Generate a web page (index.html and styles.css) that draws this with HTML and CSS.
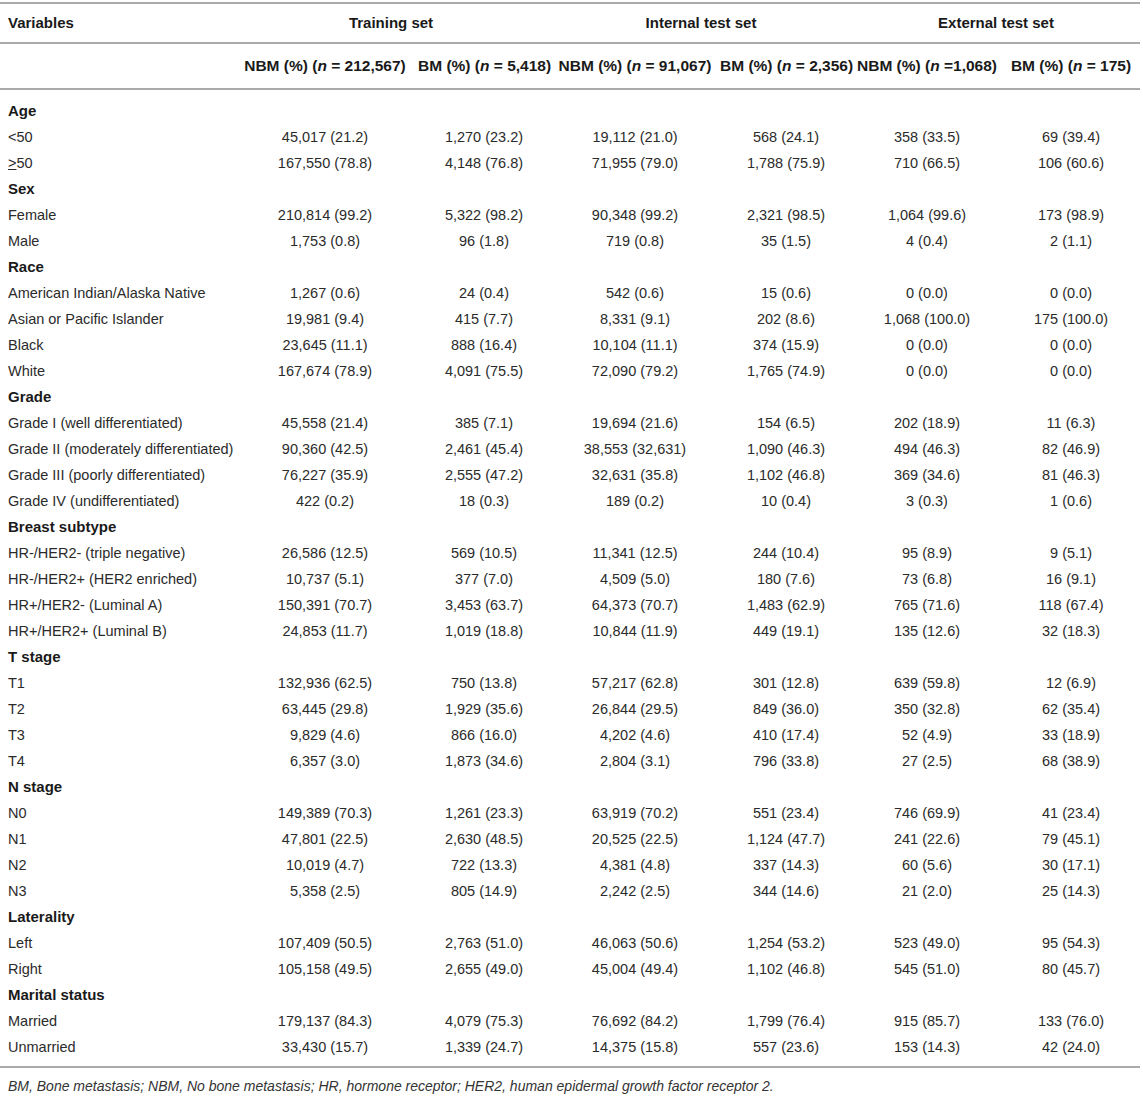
FILE: index.html
```html
<!DOCTYPE html>
<html lang="en">
<head>
  <meta charset="UTF-8">
  <meta name="viewport" content="width=device-width, initial-scale=1">
  <title>Patient characteristics</title>
  <link rel="stylesheet" href="styles.css">
</head>
<body>

  <div class="wrap">
    <table class="stats">
      <colgroup>
        <col class="c-var">
        <col class="c-train-nbm">
        <col class="c-train-bm">
        <col class="c-int-nbm">
        <col class="c-int-bm">
        <col class="c-ext-nbm">
        <col class="c-ext-bm">
      </colgroup>
      <thead>
        <tr class="head-top">
          <th class="var">Variables</th>
          <th colspan="2">Training set</th>
          <th colspan="2">Internal test set</th>
          <th colspan="2">External test set</th>
        </tr>
        <tr class="head-sub">
          <th></th>
          <th>NBM (%) (<i>n</i> = 212,567)</th>
          <th>BM (%) (<i>n</i> = 5,418)</th>
          <th>NBM (%) (<i>n</i> = 91,067)</th>
          <th>BM (%) (<i>n</i> = 2,356)</th>
          <th>NBM (%) (<i>n</i> =1,068)</th>
          <th>BM (%) (<i>n</i> = 175)</th>
        </tr>
      </thead>
      <tbody>
        <!-- Age -->
        <tr class="group"><td>Age</td><td></td><td></td><td></td><td></td><td></td><td></td></tr>
        <tr><td>&lt;50</td><td>45,017 (21.2)</td><td>1,270 (23.2)</td><td>19,112 (21.0)</td><td>568 (24.1)</td><td>358 (33.5)</td><td>69 (39.4)</td></tr>
        <tr><td><u>&gt;</u>50</td><td>167,550 (78.8)</td><td>4,148 (76.8)</td><td>71,955 (79.0)</td><td>1,788 (75.9)</td><td>710 (66.5)</td><td>106 (60.6)</td></tr>

        <!-- Sex -->
        <tr class="group"><td>Sex</td><td></td><td></td><td></td><td></td><td></td><td></td></tr>
        <tr><td>Female</td><td>210,814 (99.2)</td><td>5,322 (98.2)</td><td>90,348 (99.2)</td><td>2,321 (98.5)</td><td>1,064 (99.6)</td><td>173 (98.9)</td></tr>
        <tr><td>Male</td><td>1,753 (0.8)</td><td>96 (1.8)</td><td>719 (0.8)</td><td>35 (1.5)</td><td>4 (0.4)</td><td>2 (1.1)</td></tr>

        <!-- Race -->
        <tr class="group"><td>Race</td><td></td><td></td><td></td><td></td><td></td><td></td></tr>
        <tr><td>American Indian/Alaska Native</td><td>1,267 (0.6)</td><td>24 (0.4)</td><td>542 (0.6)</td><td>15 (0.6)</td><td>0 (0.0)</td><td>0 (0.0)</td></tr>
        <tr><td>Asian or Pacific Islander</td><td>19,981 (9.4)</td><td>415 (7.7)</td><td>8,331 (9.1)</td><td>202 (8.6)</td><td>1,068 (100.0)</td><td>175 (100.0)</td></tr>
        <tr><td>Black</td><td>23,645 (11.1)</td><td>888 (16.4)</td><td>10,104 (11.1)</td><td>374 (15.9)</td><td>0 (0.0)</td><td>0 (0.0)</td></tr>
        <tr><td>White</td><td>167,674 (78.9)</td><td>4,091 (75.5)</td><td>72,090 (79.2)</td><td>1,765 (74.9)</td><td>0 (0.0)</td><td>0 (0.0)</td></tr>

        <!-- Grade -->
        <tr class="group"><td>Grade</td><td></td><td></td><td></td><td></td><td></td><td></td></tr>
        <tr><td>Grade I (well differentiated)</td><td>45,558 (21.4)</td><td>385 (7.1)</td><td>19,694 (21.6)</td><td>154 (6.5)</td><td>202 (18.9)</td><td>11 (6.3)</td></tr>
        <tr><td>Grade II (moderately differentiated)</td><td>90,360 (42.5)</td><td>2,461 (45.4)</td><td>38,553 (32,631)</td><td>1,090 (46.3)</td><td>494 (46.3)</td><td>82 (46.9)</td></tr>
        <tr><td>Grade III (poorly differentiated)</td><td>76,227 (35.9)</td><td>2,555 (47.2)</td><td>32,631 (35.8)</td><td>1,102 (46.8)</td><td>369 (34.6)</td><td>81 (46.3)</td></tr>
        <tr><td>Grade IV (undifferentiated)</td><td>422 (0.2)</td><td>18 (0.3)</td><td>189 (0.2)</td><td>10 (0.4)</td><td>3 (0.3)</td><td>1 (0.6)</td></tr>

        <!-- Breast subtype -->
        <tr class="group"><td>Breast subtype</td><td></td><td></td><td></td><td></td><td></td><td></td></tr>
        <tr><td>HR-/HER2- (triple negative)</td><td>26,586 (12.5)</td><td>569 (10.5)</td><td>11,341 (12.5)</td><td>244 (10.4)</td><td>95 (8.9)</td><td>9 (5.1)</td></tr>
        <tr><td>HR-/HER2+ (HER2 enriched)</td><td>10,737 (5.1)</td><td>377 (7.0)</td><td>4,509 (5.0)</td><td>180 (7.6)</td><td>73 (6.8)</td><td>16 (9.1)</td></tr>
        <tr><td>HR+/HER2- (Luminal A)</td><td>150,391 (70.7)</td><td>3,453 (63.7)</td><td>64,373 (70.7)</td><td>1,483 (62.9)</td><td>765 (71.6)</td><td>118 (67.4)</td></tr>
        <tr><td>HR+/HER2+ (Luminal B)</td><td>24,853 (11.7)</td><td>1,019 (18.8)</td><td>10,844 (11.9)</td><td>449 (19.1)</td><td>135 (12.6)</td><td>32 (18.3)</td></tr>

        <!-- T stage -->
        <tr class="group"><td>T stage</td><td></td><td></td><td></td><td></td><td></td><td></td></tr>
        <tr><td>T1</td><td>132,936 (62.5)</td><td>750 (13.8)</td><td>57,217 (62.8)</td><td>301 (12.8)</td><td>639 (59.8)</td><td>12 (6.9)</td></tr>
        <tr><td>T2</td><td>63,445 (29.8)</td><td>1,929 (35.6)</td><td>26,844 (29.5)</td><td>849 (36.0)</td><td>350 (32.8)</td><td>62 (35.4)</td></tr>
        <tr><td>T3</td><td>9,829 (4.6)</td><td>866 (16.0)</td><td>4,202 (4.6)</td><td>410 (17.4)</td><td>52 (4.9)</td><td>33 (18.9)</td></tr>
        <tr><td>T4</td><td>6,357 (3.0)</td><td>1,873 (34.6)</td><td>2,804 (3.1)</td><td>796 (33.8)</td><td>27 (2.5)</td><td>68 (38.9)</td></tr>

        <!-- N stage -->
        <tr class="group"><td>N stage</td><td></td><td></td><td></td><td></td><td></td><td></td></tr>
        <tr><td>N0</td><td>149,389 (70.3)</td><td>1,261 (23.3)</td><td>63,919 (70.2)</td><td>551 (23.4)</td><td>746 (69.9)</td><td>41 (23.4)</td></tr>
        <tr><td>N1</td><td>47,801 (22.5)</td><td>2,630 (48.5)</td><td>20,525 (22.5)</td><td>1,124 (47.7)</td><td>241 (22.6)</td><td>79 (45.1)</td></tr>
        <tr><td>N2</td><td>10,019 (4.7)</td><td>722 (13.3)</td><td>4,381 (4.8)</td><td>337 (14.3)</td><td>60 (5.6)</td><td>30 (17.1)</td></tr>
        <tr><td>N3</td><td>5,358 (2.5)</td><td>805 (14.9)</td><td>2,242 (2.5)</td><td>344 (14.6)</td><td>21 (2.0)</td><td>25 (14.3)</td></tr>

        <!-- Laterality -->
        <tr class="group"><td>Laterality</td><td></td><td></td><td></td><td></td><td></td><td></td></tr>
        <tr><td>Left</td><td>107,409 (50.5)</td><td>2,763 (51.0)</td><td>46,063 (50.6)</td><td>1,254 (53.2)</td><td>523 (49.0)</td><td>95 (54.3)</td></tr>
        <tr><td>Right</td><td>105,158 (49.5)</td><td>2,655 (49.0)</td><td>45,004 (49.4)</td><td>1,102 (46.8)</td><td>545 (51.0)</td><td>80 (45.7)</td></tr>

        <!-- Marital status -->
        <tr class="group"><td>Marital status</td><td></td><td></td><td></td><td></td><td></td><td></td></tr>
        <tr><td>Married</td><td>179,137 (84.3)</td><td>4,079 (75.3)</td><td>76,692 (84.2)</td><td>1,799 (76.4)</td><td>915 (85.7)</td><td>133 (76.0)</td></tr>
        <tr><td>Unmarried</td><td>33,430 (15.7)</td><td>1,339 (24.7)</td><td>14,375 (15.8)</td><td>557 (23.6)</td><td>153 (14.3)</td><td>42 (24.0)</td></tr>
      </tbody>
    </table>

    <p class="note">BM, Bone metastasis; NBM, No bone metastasis; HR, hormone receptor; HER2, human epidermal growth factor receptor 2.</p>
  </div>

</body>
</html>
```

FILE: styles.css
```css
body { margin: 0; background: #fff; color: #2b2b2b; font-family: "Liberation Sans", Arial, sans-serif; }
.wrap { width: 1140px; padding-top: 2px; }

.stats { width: 100%; border-collapse: collapse; table-layout: fixed; font-size: 14.5px; }
.c-var { width: 232px; }
.c-train-nbm { width: 186px; }
.c-train-bm { width: 132px; }
.c-int-nbm { width: 170px; }
.c-int-bm { width: 132px; }
.c-ext-nbm { width: 150px; }
.c-ext-bm { width: 138px; }

.stats th { padding: 0; font-size: 15px; font-weight: bold; color: #1a1a1a; text-align: center; white-space: nowrap; }
.stats th.var { text-align: left; padding-left: 8px; }
.head-top th { line-height: 38px; border-top: 2px solid #aaa; border-bottom: 2px solid #aaa; }
.head-sub th { line-height: 44px; font-size: 15.5px; border-bottom: 2px solid #aaa; }

.stats td { padding: 0; line-height: 26px; text-align: center; white-space: nowrap; }
.stats td:first-child { text-align: left; padding-left: 8px; }
.stats tbody tr:first-child td { padding-top: 8px; }
.stats tbody tr:last-child td { padding-bottom: 6px; border-bottom: 2px solid #aaa; }
.group td { font-weight: bold; font-size: 15px; color: #1a1a1a; }

.note { margin: 8px 0 0; padding-left: 8px; font-size: 14px; font-style: italic; color: #333; line-height: 20px; }
```
